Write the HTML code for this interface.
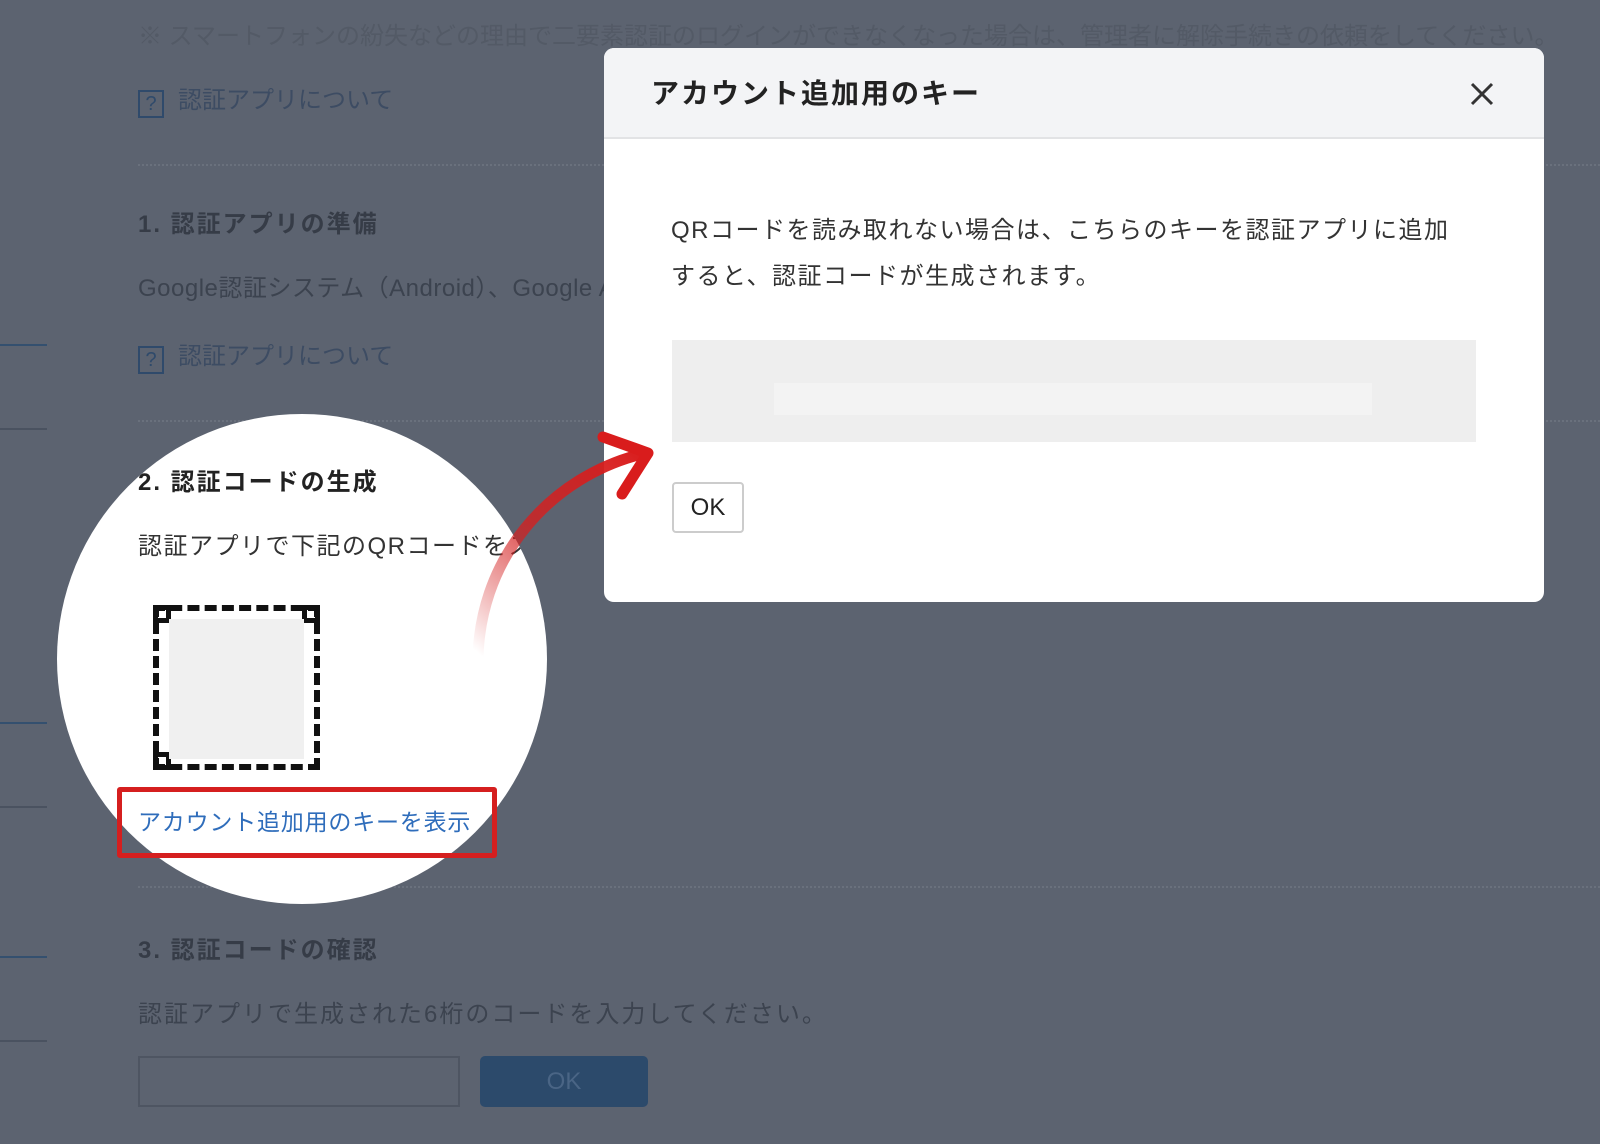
<!DOCTYPE html>
<html><head><meta charset="utf-8"><style>
*{margin:0;padding:0;box-sizing:border-box}
body{width:1600px;height:1144px;overflow:hidden;background:#5c6370;position:relative;font-family:"Liberation Sans","Noto Sans CJK JP",sans-serif}
.a{position:absolute;white-space:nowrap}
.dim{color:#3c434f;font-size:24px}
.h{font-weight:bold;font-size:24px;color:#363c47;letter-spacing:2px}
.q{display:inline-block;width:26px;height:28px;border:2px solid #2f4a6b;color:#2f4a6b;font-size:20px;text-align:center;line-height:24px;margin-right:14px;vertical-align:middle}
.lk{color:#3d4c63;font-size:24px}
.dot{position:absolute;left:138px;right:0;border-top:2px dotted #6a717d;height:0}
.ln{position:absolute;left:0;width:47px;height:2px}
</style></head><body>
<div class="a dim" style="left:138px;top:16px;color:#535a66">※ スマートフォンの紛失などの理由で二要素認証のログインができなくなった場合は、管理者に解除手続きの依頼をしてください。</div>
<div class="a" style="left:138px;top:80px"><span class="q">?</span><span class="lk">認証アプリについて</span></div>
<div class="dot" style="top:164px"></div>
<div class="a h" style="left:138px;top:204px">1. 認証アプリの準備</div>
<div class="a dim" style="left:138px;top:268px;letter-spacing:0.5px">Google認証システム（Android）、Google Authenticator（iOS）などの認証アプリをインストールしてください。</div>
<div class="a" style="left:138px;top:336px"><span class="q">?</span><span class="lk">認証アプリについて</span></div>
<div class="dot" style="top:420px"></div>
<div class="ln" style="top:344px;background:#34506f"></div>
<div class="ln" style="top:428px;background:#4a5260"></div>
<div class="ln" style="top:722px;background:#34506f"></div>
<div class="ln" style="top:806px;background:#4a5260"></div>
<div class="ln" style="top:956px;background:#34506f"></div>
<div class="ln" style="top:1040px;background:#4a5260"></div>
<div class="dot" style="top:886px"></div>
<div class="a h" style="left:138px;top:930px">3. 認証コードの確認</div>
<div class="a dim" style="left:138px;top:994px;letter-spacing:2px">認証アプリで生成された6桁のコードを入力してください。</div>
<div class="a" style="left:138px;top:1056px;width:322px;height:51px;border:2px solid #4e5562"></div>
<div class="a" style="left:480px;top:1056px;width:168px;height:51px;background:#2c4a6b;border-radius:5px;color:#4a6585;font-size:24px;text-align:center;line-height:51px">OK</div>

<div class="a" style="left:57px;top:414px;width:490px;height:490px;border-radius:50%;background:#fff;overflow:hidden">
 <div class="a" style="left:81px;top:48px;font-weight:bold;font-size:24px;color:#222;letter-spacing:2px">2. 認証コードの生成</div>
 <div class="a" style="left:81px;top:112px;font-size:24px;color:#333;letter-spacing:1.5px">認証アプリで下記のQRコードをスキャンしてください。</div>
 <div class="a" style="left:96px;top:191px;width:167px;height:165px;border:6px dashed #111"></div>
 <div class="a" style="left:96px;top:191px;width:18px;height:18px;border:5px solid #111"></div>
 <div class="a" style="left:245px;top:191px;width:18px;height:18px;border:5px solid #111"></div>
 <div class="a" style="left:96px;top:338px;width:18px;height:18px;border:5px solid #111"></div>
 <div class="a" style="left:112px;top:205px;width:135px;height:140px;background:#f0f0f0"></div>
 <div class="a" style="left:81px;top:389px;font-size:23px;color:#2f6dbb;letter-spacing:0.8px">アカウント追加用のキーを表示</div>
</div>
<div class="a" style="left:117px;top:787px;width:380px;height:71px;border:5px solid #d51f1f;border-radius:3px"></div>

<div class="a" style="left:604px;top:48px;width:940px;height:554px;background:#fff;border-radius:10px;overflow:hidden">
 <div style="height:91px;background:#f3f4f6;border-bottom:2px solid #e2e3e5"></div>
 <div class="a" style="left:47px;top:24px;font-weight:bold;font-size:28px;color:#222;letter-spacing:2px">アカウント追加用のキー</div>
 <svg class="a" style="left:866px;top:34px" width="24" height="24" viewBox="0 0 24 24"><path d="M2 2L22 22M22 2L2 22" stroke="#333" stroke-width="3"/></svg>
 <div class="a" style="left:67px;top:160px;font-size:24px;color:#333;line-height:46px;letter-spacing:1.5px">QRコードを読み取れない場合は、こちらのキーを認証アプリに追加<br>すると、認証コードが生成されます。</div>
 <div class="a" style="left:68px;top:292px;width:804px;height:102px;background:#eeeeee"></div>
 <div class="a" style="left:170px;top:335px;width:598px;height:32px;background:#f3f3f3"></div>
 <div class="a" style="left:68px;top:434px;width:72px;height:51px;border:2px solid #ccc;border-radius:4px;font-size:24px;color:#222;text-align:center;line-height:47px">OK</div>
</div>

<svg class="a" style="left:0;top:0" width="1600" height="1144">
<defs><linearGradient id="g" x1="478" y1="653" x2="648" y2="453" gradientUnits="userSpaceOnUse"><stop offset="0" stop-color="#d42020" stop-opacity="0"/><stop offset="0.5" stop-color="#d42020" stop-opacity="0.8"/><stop offset="1" stop-color="#d91c1c"/></linearGradient></defs>
<path d="M478 670C475 560 550 475 646 453" fill="none" stroke="url(#g)" stroke-width="11"/>
<path d="M603 437L648 453L622 494" fill="none" stroke="#d91c1c" stroke-width="11" stroke-linecap="round" stroke-linejoin="round"/>
</svg>
</body></html>
